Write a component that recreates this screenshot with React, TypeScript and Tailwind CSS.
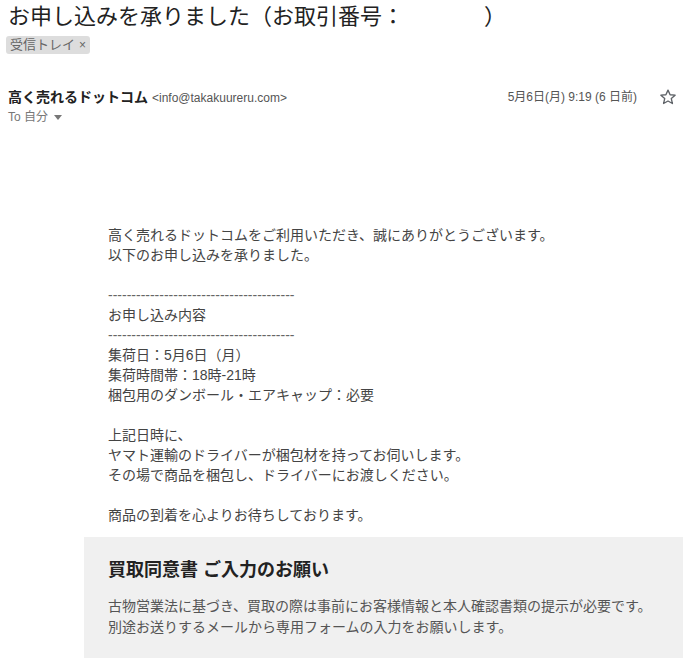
const font = { fontFamily: '"Liberation Sans", Arial, "Noto Sans CJK JP", sans-serif' };

const dashes = "----------------------------------------";

const bodyLines = [
  "高く売れるドットコムをご利用いただき、誠にありがとうございます。",
  "以下のお申し込みを承りました。",
  "",
  dashes,
  "お申し込み内容",
  dashes,
  "集荷日：5月6日（月）",
  "集荷時間帯：18時-21時",
  "梱包用のダンボール・エアキャップ：必要",
  "",
  "上記日時に、",
  "ヤマト運輸のドライバーが梱包材を持ってお伺いします。",
  "その場で商品を梱包し、ドライバーにお渡しください。",
  "",
  "商品の到着を心よりお待ちしております。",
];

function Star() {
  return (
    <svg width="18" height="18" viewBox="0 0 24 24" fill="none" stroke="#5f6368" strokeWidth="1.8" strokeLinejoin="round">
      <path d="M12 2.8l2.8 6.2 6.7.6-5.1 4.5 1.5 6.6L12 17.3l-5.9 3.4 1.5-6.6-5.1-4.5 6.7-.6z" />
    </svg>
  );
}

export default function App() {
  return (
    <div className="min-h-screen bg-white pl-2 pt-[3px]" style={font}>
      <h1 className="text-[22px] leading-[28px] text-[#222] font-normal">
        お申し込みを承りました（お取引番号：<span className="inline-block w-[80px]" />）
      </h1>

      <div className="mt-[5px] -ml-[2px] inline-flex items-center h-[18px] rounded-[3px] bg-[#dddddd] px-[4px] text-[13px] text-[#666]">
        受信トレイ <span className="ml-[4px] text-[12px]">×</span>
      </div>

      <div className="mt-[31px] flex items-center justify-between pr-[12px] h-[20px]">
        <div className="flex items-baseline gap-[4px]">
          <span className="text-[14px] font-bold text-[#222]">高く売れるドットコム</span>
          <span className="text-[12px] text-[#555]">&lt;info@takakuureru.com&gt;</span>
        </div>
        <div className="flex items-center gap-[22px]">
          <span className="text-[12px] text-[#555]">5月6日(月) 9:19 (6 日前)</span>
          <Star />
        </div>
      </div>

      <div className="flex items-center h-[20px] text-[12px] text-[#777]">
        To 自分
        <svg className="ml-[6px]" width="8" height="5" viewBox="0 0 8 5">
          <path d="M0 0h8L4 5z" fill="#777" />
        </svg>
      </div>

      <div className="mt-[98px] pl-[100px] text-[14px] leading-[20px] text-[#444]">
        {bodyLines.map((line, i) =>
          line === "" ? (
            <div key={i} className="h-[20px]" />
          ) : (
            <div key={i} className={line === dashes ? "text-[#666]" : ""}>
              {line}
            </div>
          )
        )}
      </div>

      <div className="mt-[12px] ml-[76px] mr-[6px] bg-[#f0f0f0] pl-[24px] pr-4 pt-[20px] pb-[20px]">
        <div className="text-[18px] leading-[26px] font-bold text-[#222]">買取同意書 ご入力のお願い</div>
        <div className="mt-[13px] text-[14px] leading-[21px] text-[#555]">
          <div>古物営業法に基づき、買取の際は事前にお客様情報と本人確認書類の提示が必要です。</div>
          <div>別途お送りするメールから専用フォームの入力をお願いします。</div>
        </div>
      </div>
    </div>
  );
}
